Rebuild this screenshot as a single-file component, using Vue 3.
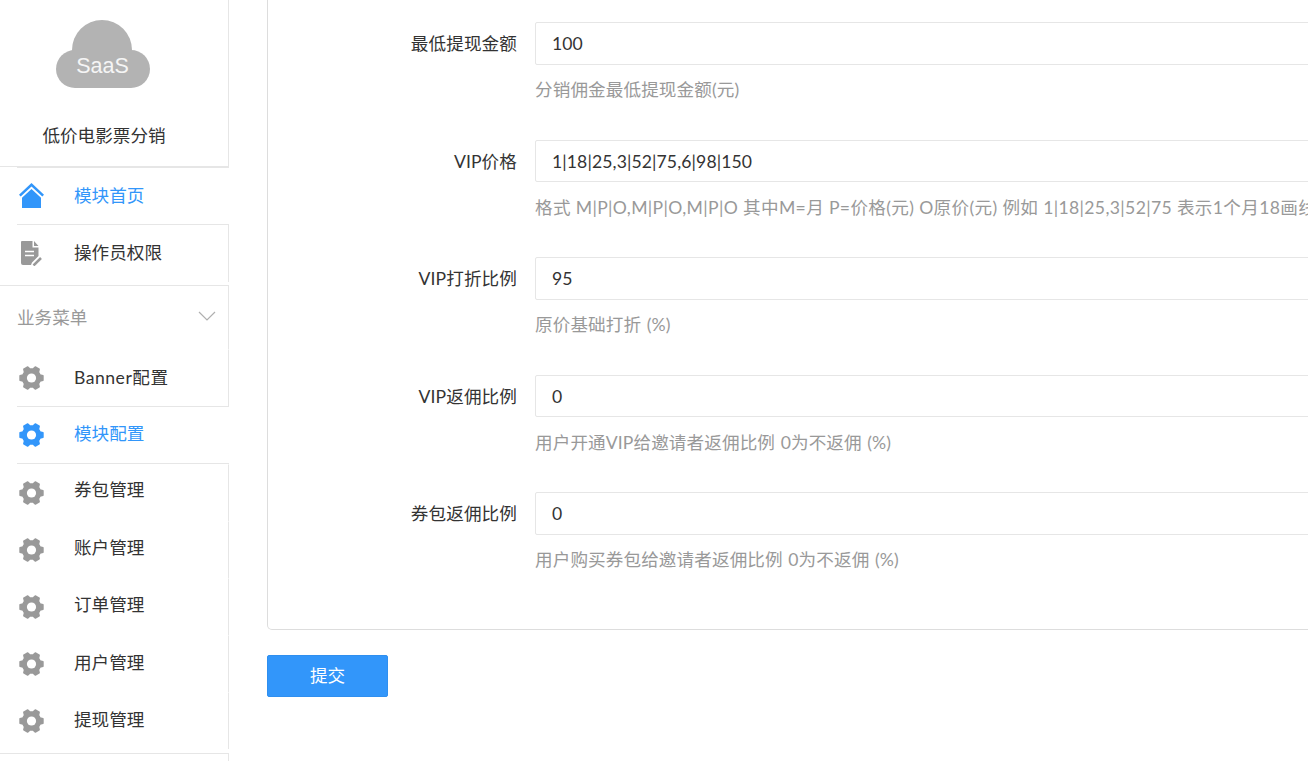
<script setup>
const fields = [
  { label: '最低提现金额', value: '100', help: '分销佣金最低提现金额(元)' },
  { label: 'VIP价格', value: '1|18|25,3|52|75,6|98|150', help: '格式 M|P|O,M|P|O,M|P|O 其中M=月 P=价格(元) O原价(元) 例如 1|18|25,3|52|75 表示1个月18画线', wide: true },
  { label: 'VIP打折比例', value: '95', help: '原价基础打折 (%)' },
  { label: 'VIP返佣比例', value: '0', help: '用户开通VIP给邀请者返佣比例 0为不返佣 (%)' },
  { label: '券包返佣比例', value: '0', help: '用户购买券包给邀请者返佣比例 0为不返佣 (%)' },
]
function buildGear() {
  const pts = []
  const at = (r, deg) => {
    const t = (deg * Math.PI) / 180
    return `${(12.5 + r * Math.cos(t)).toFixed(2)} ${(12 + r * Math.sin(t)).toFixed(2)}`
  }
  for (let i = 0; i < 6; i++) {
    const a = i * 60
    pts.push(at(9, a - 20), at(11.6, a - 11), at(11.6, a + 11), at(9, a + 20))
  }
  return 'M' + pts.join('L') + 'Z'
}
const gear = buildGear()
const menu = [
  { name: 'Banner配置', cls: 'edged ruled first' },
  { name: '模块配置', cls: 'active ruled' },
  { name: '券包管理', cls: 'edged raised' },
  { name: '账户管理', cls: 'edged mid' },
  { name: '订单管理', cls: 'edged mid' },
  { name: '用户管理', cls: 'edged low' },
  { name: '提现管理', cls: 'edged low' },
]
</script>

<template>
  <div class="page">
    <aside class="side">
      <div class="logo">
        <svg class="cloud" width="94" height="68" viewBox="0 0 94 68">
          <circle cx="46" cy="30" r="30" fill="#b3b3b3" />
          <rect x="0" y="30" width="94" height="38" rx="19" fill="#b3b3b3" />
          <text x="46.500" y="53" text-anchor="middle" class="cloud-text">SaaS</text>
        </svg>
        <div class="brand">低价电影票分销</div>
      </div>
      <div class="item home active">
        <svg class="ico" width="25" height="25" viewBox="0 0 25 25">
          <path fill="#3296fa" d="M12.500 0 0 11.800l1.700 1.700L12.500 3.500l10.800 10L25 11.800z" />
          <path fill="#3296fa" d="M12.500 6 3 14.700V25h19V14.700z" />
        </svg>
        <span>模块首页</span>
      </div>
      <div class="item perm">
        <svg class="ico" width="25" height="25" viewBox="0 0 25 25">
          <path fill="#999" d="M2.500 0h11v6.500h6v8.500l-6.500 6.500-1 2.500H4Q2 24 2 22V1zM15 0l4.500 5h-4.500z" />
          <path stroke="#fff" stroke-width="1.500" fill="none" d="M6 10.500h9M6 14.500h9" />
          <path stroke="#999" stroke-width="2.500" fill="none" d="M14.500 24.500l7.500-7.500" />
        </svg>
        <span>操作员权限</span>
      </div>
      <div class="group">
        <span>业务菜单</span>
        <svg width="18" height="10" viewBox="0 0 18 10" fill="none"><path stroke="#b0b0b0" stroke-width="1.200" d="M1 1l8 8 8-8" /></svg>
      </div>
      <div v-for="m in menu" :key="m.name" class="item sub" :class="m.cls">
        <svg class="ico" width="25" height="24" viewBox="0 0 25 24">
          <g :fill="m.cls.includes('active') ? '#3296fa' : '#999'">
            <path :stroke="m.cls.includes('active') ? '#3296fa' : '#999'" stroke-width="1.600" stroke-linejoin="round" :d="gear" />
          </g>
          <circle cx="12.500" cy="12" r="4.600" fill="#fff" />
        </svg>
        <span>{{ m.name }}</span>
      </div>
      <div class="side-end"></div>
    </aside>
    <main class="main">
      <section class="card">
        <div v-for="f in fields" :key="f.label" class="row">
          <label class="label">{{ f.label }}</label>
          <div class="control">
            <div class="input">{{ f.value }}</div>
            <div class="help" :class="{ wide: f.wide }">{{ f.help }}</div>
          </div>
        </div>
      </section>
      <button class="submit" type="button">提交</button>
    </main>
  </div>
</template>

<style>
html, body { margin: 0; overflow: hidden; background: #fff; }
</style>

<style scoped>
.page {
  display: flex;
  width: 1308px;
  height: 761px;
  overflow: hidden;
  font-family: "Lato", "Noto Sans CJK SC", sans-serif;
  font-size: 17.6px;
  color: #333;
  background: #fff;
}
.side { width: 229px; flex: none; }
.logo { height: 167px; box-sizing: border-box; padding-top: 20px; text-align: center; border-right: 1px solid #e6e6e6; border-bottom: 1px solid #e6e6e6; }
.cloud { display: block; margin: 0 auto; position: relative; left: -11px; }
.cloud-text { font-family: "Liberation Sans", sans-serif; font-size: 21.500px; fill: #f5f5f5; }
.brand { margin-top: 35px; padding-right: 20px; line-height: 26px; }
.item { display: flex; align-items: center; box-sizing: border-box; padding-left: 19px; }
.item span { margin-left: 30px; line-height: 26px; }
.ico { flex: none; }
.active { color: #3296fa; }
.home { position: relative; height: 58px; border-bottom: 1px solid #e6e6e6; }
.home span { margin-bottom: 0; }
.home::after { content: ""; position: absolute; left: 0; bottom: -1px; width: 17px; height: 1px; background: #fff; }
.home::before { content: ""; position: absolute; left: 17px; right: 0; top: 0; height: 1px; background: #e6e6e6; }
.perm { height: 57px; margin-bottom: 3px; border-right: 1px solid #e6e6e6; }
.perm span { margin-bottom: 1px; }
.group {
  display: flex;
  justify-content: space-between;
  align-items: center;
  height: 64px;
  padding: 0 12px 3px 17px;
  color: #999;
  box-sizing: border-box;
  border-top: 1px solid #e6e6e6;
  border-right: 1px solid #e6e6e6;
}
.sub { height: 57px; padding-bottom: 1px; }
.sub span { margin-bottom: 3px; }
.first { height: 58px; }
.first span { margin-bottom: 1px; letter-spacing: .5px; }
.raised span { margin-bottom: 5px; }
.mid span { margin-bottom: 3px; }
.low span { margin-bottom: 1px; }
.edged { border-right: 1px solid #e6e6e6; border-top: 1px solid #fff; }
.ruled { position: relative; }
.ruled::after { content: ""; position: absolute; left: 17px; right: 0; bottom: 0; height: 1px; background: #e6e6e6; }
.side-end { height: 8px; margin-top: 4px; border-top: 1px solid #e6e6e6; border-right: 1px solid #e6e6e6; }
.main { flex: 1; min-width: 0; padding: 0 0 0 38px; }
.card {
  box-sizing: border-box;
  width: 1200px;
  height: 630px;
  padding-top: 22px;
  border: 1px solid #ddd;
  border-top: none;
  border-radius: 0 0 0 5px;
  letter-spacing: .1px;
}
.row { display: flex; height: 117.500px; }
.label { width: 249px; flex: none; height: 42.500px; line-height: 44px; text-align: right; white-space: nowrap; color: #333; }
.control { margin-left: 18px; flex: 1; min-width: 0; }
.input {
  box-sizing: border-box;
  height: 42.500px;
  line-height: 42px;
  padding-left: 16px;
  border: 1px solid #e6e6e6;
  border-radius: 2px;
  white-space: nowrap;
}
.help { margin-top: 12.500px; line-height: 26px; color: #999; white-space: nowrap; word-spacing: 1px; }
.wide { letter-spacing: .35px; word-spacing: 0; }
.submit {
  display: block;
  width: 121px;
  height: 42px;
  margin-top: 25px;
  border: 1px solid #2f8fef;
  border-radius: 2px;
  background: #3296fa;
  color: #fff;
  font: inherit;
  line-height: 38px;
  padding: 0;
}
</style>
